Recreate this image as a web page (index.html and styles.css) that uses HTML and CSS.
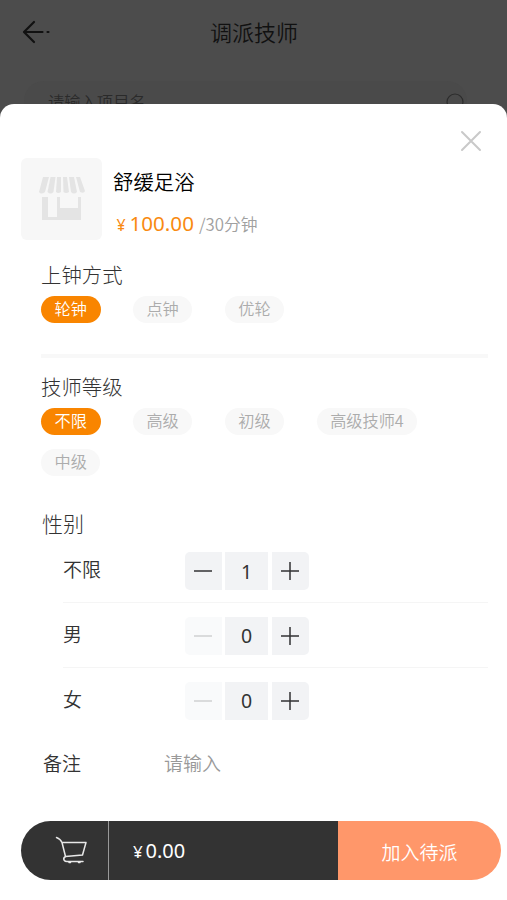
FILE: index.html
```html
<!DOCTYPE html>
<html lang="zh-CN">
<head>
<meta charset="utf-8">
<title>调派技师</title>
<link rel="stylesheet" href="styles.css">
</head>
<body>
<div class="page">
  <header class="header">
    <svg class="back" viewBox="0 0 30 26" width="30" height="26"><path d="M12 3 2 13 12 23M2.500 13h18M25.500 13h1"/></svg>
    <h1>调派技师</h1>
  </header>
  <div class="search">
    <span class="search-text">请输入项目名</span>
    <svg class="search-icon" viewBox="0 0 24 24" width="24" height="24"><circle cx="11" cy="10" r="8"/><path d="m17 16 5 5"/></svg>
  </div>
</div>

<section class="sheet">
  <div class="sheet-top">
    <svg class="close" viewBox="0 0 22 22" width="22" height="22"><path d="M2 2l18 18M20 2l-18 18"/></svg>
  </div>
  <div class="product">
    <div class="thumb">
      <svg viewBox="0 0 82 82" width="82" height="82">
        <g class="awning">
          <path d="M22 19h6l-4 15q-4 3-6 0z"/><path d="M29.500 19h5l-2 15q-3 3-6 0z"/><path d="M36 19h4v15q-3 2-5 0z"/><path d="M42 19h4l2 15q-3 2-5.500 0z"/><path d="M48 19h5l3 15q-3 3-6 0z"/><path d="M55 19h4l5 14q-1 3-5 1z"/>
        </g>
        <path class="shop" d="M21 39h6v20h9V39h3v11h18V39h3v23H21z"/>
      </svg>
    </div>
    <div class="product-info">
      <h2>舒缓足浴</h2>
      <div class="price"><span class="yen">¥</span><span class="amount">100.00</span><span class="unit">/30分钟</span></div>
    </div>
  </div>

  <div class="group mode">
    <h3>上钟方式</h3>
    <div class="pills"><span class="pill active">轮钟</span><span class="pill">点钟</span><span class="pill">优轮</span></div>
  </div>

  <div class="group level">
    <h3>技师等级</h3>
    <div class="pills"><span class="pill active">不限</span><span class="pill">高级</span><span class="pill">初级</span><span class="pill">高级技师4</span><span class="pill">中级</span></div>
  </div>

  <div class="group gender">
    <h3>性别</h3>
    <div class="rows">
      <div class="row">
        <span class="label">不限</span>
        <div class="stepper">
          <span class="btn minus"><svg viewBox="0 0 18 18" width="18" height="18"><path d="M0 9h18"/></svg></span>
          <span class="num">1</span>
          <span class="btn plus"><svg viewBox="0 0 18 18" width="18" height="18"><path d="M0 9h18M9 0v18"/></svg></span>
        </div>
      </div>
      <div class="row">
        <span class="label">男</span>
        <div class="stepper">
          <span class="btn minus disabled"><svg viewBox="0 0 18 18" width="18" height="18"><path d="M0 9h18"/></svg></span>
          <span class="num">0</span>
          <span class="btn plus"><svg viewBox="0 0 18 18" width="18" height="18"><path d="M0 9h18M9 0v18"/></svg></span>
        </div>
      </div>
      <div class="row">
        <span class="label">女</span>
        <div class="stepper">
          <span class="btn minus disabled"><svg viewBox="0 0 18 18" width="18" height="18"><path d="M0 9h18"/></svg></span>
          <span class="num">0</span>
          <span class="btn plus"><svg viewBox="0 0 18 18" width="18" height="18"><path d="M0 9h18M9 0v18"/></svg></span>
        </div>
      </div>
    </div>
  </div>

  <div class="remark"><span class="remark-label">备注</span><span class="remark-input">请输入</span></div>

  <footer class="bar">
    <div class="cart">
      <svg viewBox="0 0 34 30" width="34" height="30"><path d="M1.500 1.500q4 1.500 5.500 5l3.500 14 17-1.500 3.500-12.500H7M10.500 20.500q-2.500 1.500-1.500 3.500 1 1.500 3 1.500H28"/><path d="M14 26.500h1.500M23.500 26.500h1.500"/></svg>
    </div>
    <div class="total"><span class="total-yen">¥</span><span>0.00</span></div>
    <div class="submit">加入待派</div>
  </footer>
</section>
</body>
</html>
```

FILE: styles.css
```css
* { box-sizing: border-box; }
body {
  margin: 0;
  height: 900px;
  position: relative;
  overflow: hidden;
  background: #4c4c4c;
  font-family: "Noto Sans CJK SC", sans-serif;
  font-weight: 350;
  color: #333;
}
h1, h2, h3 { margin: 0; font-weight: 350; }
svg { display: block; fill: none; stroke-linecap: round; stroke-linejoin: round; }

.header { height: 64px; display: grid; grid-template-columns: 60px 1fr 60px; align-items: center; }
.back { margin-left: 22px; stroke: #111; stroke-width: 2.2; }
.header h1 { text-align: center; font-size: 22px; line-height: 32px; padding: 0 0 2px 1px; color: #111; }
.search { display: flex; justify-content: space-between; margin: 17px 40px 0 24px; padding: 0 0 0 24px; height: 40px; align-items: center; background: #4a4a4a; border-radius: 20px 20px 0 0; }
.search-text { font-size: 16.3px; color: #2a2a2a; }
.search-icon { stroke: #2c2c2c; stroke-width: 1.2; margin: 6px -1px 0 0; }

.sheet {
  position: absolute;
  inset: 104px 0 0;
  background: #fff;
  border-radius: 14px 14px 0 0;
  display: flex;
  flex-direction: column;
}
.sheet-top { height: 54px; display: flex; justify-content: flex-end; padding: 25.5px 25px 0; }
.close { stroke: #c9c9c9; stroke-width: 2; }

.product { display: flex; height: 82px; margin-left: 21px; }
.thumb { width: 81px; height: 82px; border-radius: 6px; background: #f7f7f7; overflow: hidden; }
.awning, .shop { fill: #e4e4e4; }
.product-info { padding: 8px 0 0 11px; }
.product-info h2 { font-size: 20.4px; line-height: 30px; color: #000; }
.price { display: flex; align-items: baseline; height: 34px; margin-top: 10px; line-height: 34px; color: #f98a10; font-family: "Noto Sans", "Noto Sans CJK SC", sans-serif; font-weight: 400; }
.yen { width: 16.5px; padding-left: 3.5px; font-size: 16px; }
.amount { font-size: 20.6px; }
.unit { margin-left: 5px; font-size: 16.8px; color: #a0a0a0; font-family: "Noto Sans CJK SC", sans-serif; font-weight: 350; }

.group { margin: 0 19px 0 41px; }
.group h3 { font-size: 20.4px; line-height: 30px; color: #333; font-weight: 300; }
.mode { height: 118px; padding-top: 19px; border-bottom: 4px solid #f8f8f8; }
.pills { display: flex; flex-wrap: wrap; column-gap: 32.5px; row-gap: 14px; margin-top: 7px; }
.pill { height: 27px; padding: 0 13.5px; border-radius: 14px; background: #f8f8f8; color: #acacac; font-size: 16.2px; line-height: 25px; }
.pill.active { background: #f98500; color: #fff; padding: 0 14px 0 13.5px; margin-right: -.5px; }
.level { padding-top: 13px; }
.gender { margin-top: 32px; }
.gender h3 { font-size: 21px; padding-left: 1px; }
.rows { margin: 2px 0 0 22px; }
.row { display: flex; align-items: center; height: 64.5px; border-bottom: 1px solid #f5f5f5; padding-top: 2px; }
.row:first-child { height: 63px; padding-top: 0; }
.row:last-child { border-bottom: 0; height: 66px; padding-top: 0; }
.label { width: 122px; font-size: 19px; line-height: 28px; padding-bottom: 4px; }
.stepper { display: flex; gap: 3px; }
.btn, .num { display: flex; align-items: center; justify-content: center; height: 38px; background: #f2f3f5; }
.btn { width: 37px; stroke: #323233; stroke-width: 1.5; }
.btn svg { stroke-linecap: butt; margin-right: 1px; }
.num { width: 43px; margin-right: 1px; font-family: "Noto Sans", sans-serif; font-weight: 400; font-size: 19.5px; }
.minus { border-radius: 5px 0 0 5px; }
.plus { border-radius: 0 5px 5px 0; }
.disabled { background: #f9fafb; stroke: #cfd0d2; }

.remark { display: flex; margin: 15px 0 0 43px; font-size: 19px; line-height: 28px; }
.remark-label { width: 121px; }
.remark-input { color: #999; }

.bar { display: flex; height: 59px; margin: auto 6px 20px 21px; color: #fff; }
.cart { width: 88px; background: #333; border-radius: 30px 0 0 30px; border-right: 1px solid #999; padding: 15px 0 0 34px; stroke: #e8e8e8; stroke-width: 1.5; }
.total { flex: 1; display: flex; align-items: baseline; background: #333; padding-left: 24px; line-height: 59px; font-family: "Noto Sans", sans-serif; font-weight: 400; font-size: 20px; }
.total-yen { font-size: 17px; width: 12.5px; }
.submit { width: 163px; background: #ff976a; border-radius: 0 30px 30px 0; text-align: center; font-size: 19px; line-height: 61px; }
```
